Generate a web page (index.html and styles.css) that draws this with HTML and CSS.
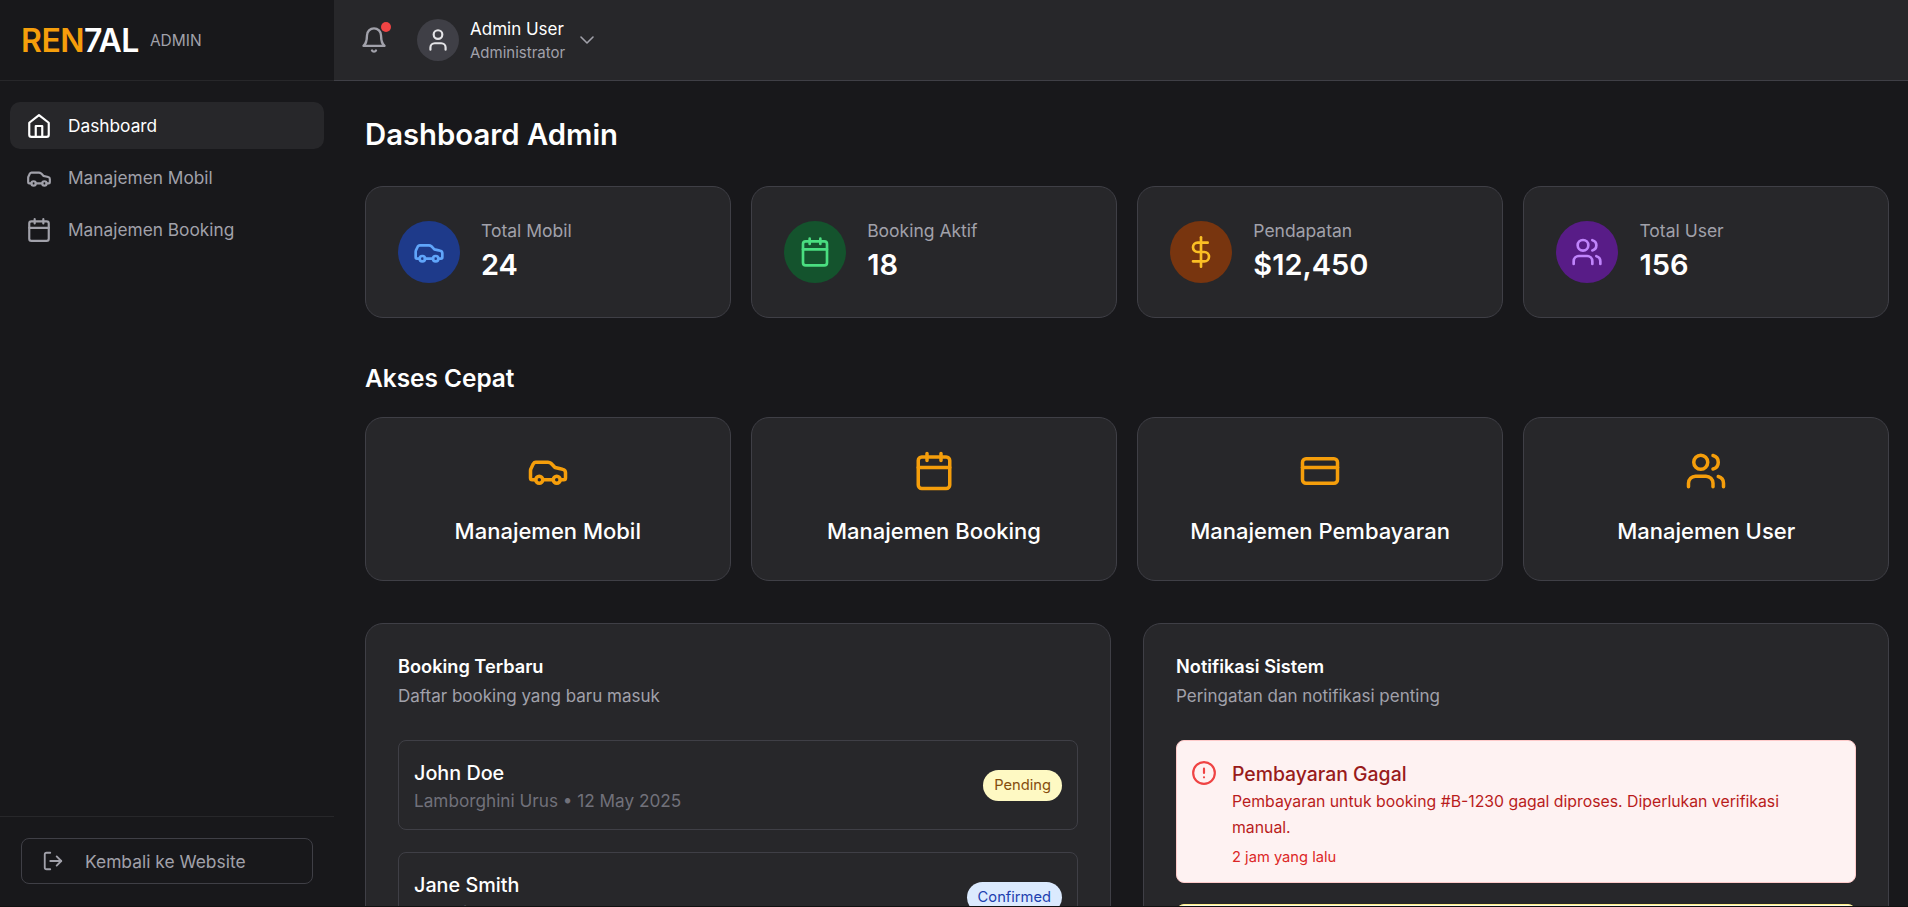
FILE: index.html
```html
<!DOCTYPE html>
<html lang="en">

<head>
    <meta charset="UTF-8">
    <meta name="viewport" content="width=device-width, initial-scale=1.0">
    <title>REN7AL Admin</title>
    <link rel="stylesheet" href="styles.css">
</head>

<body>
    <svg class="sprite" aria-hidden="true">
        <symbol id="i-home" viewBox="0 0 24 24"><path d="M3 9l9-7 9 7v11a2 2 0 0 1-2 2H5a2 2 0 0 1-2-2z"/><path d="M9 22V12h6v10"/></symbol>
        <symbol id="i-car" viewBox="0 0 24 24"><path d="M19 17h2c.6 0 1-.4 1-1v-3c0-.9-.7-1.7-1.5-1.9C18.7 10.6 16 10 16 10s-1.3-1.4-2.2-2.3c-.5-.4-1.1-.7-1.8-.7H5c-.6 0-1.1.4-1.4.9l-1.4 2.9A3.7 3.7 0 0 0 2 12v4c0 .6.4 1 1 1h2"/><circle cx="7" cy="17" r="2"/><path d="M9 17h6"/><circle cx="17" cy="17" r="2"/></symbol>
        <symbol id="i-calendar" viewBox="0 0 24 24"><rect x="3" y="4" width="18" height="18" rx="2"/><path d="M16 2v4M8 2v4M3 10h18"/></symbol>
        <symbol id="i-dollar" viewBox="0 0 24 24"><path d="M12 1v22"/><path d="M17 5H9.5a3.5 3.5 0 0 0 0 7h5a3.5 3.5 0 0 1 0 7H6"/></symbol>
        <symbol id="i-users" viewBox="0 0 24 24"><path d="M16 21v-2a4 4 0 0 0-4-4H6a4 4 0 0 0-4 4v2"/><circle cx="9" cy="7" r="4"/><path d="M22 21v-2a4 4 0 0 0-3-3.87"/><path d="M16 3.13a4 4 0 0 1 0 7.75"/></symbol>
        <symbol id="i-card" viewBox="0 0 24 24"><rect x="2" y="5" width="20" height="14" rx="2"/><path d="M2 10h20"/></symbol>
        <symbol id="i-bell" viewBox="0 0 24 24"><path d="M6 8a6 6 0 0 1 12 0c0 7 3 9 3 9H3s3-2 3-9"/><path d="M10.3 21a1.94 1.94 0 0 0 3.4 0"/></symbol>
        <symbol id="i-user" viewBox="0 0 24 24"><path d="M19 21v-2a4 4 0 0 0-4-4H9a4 4 0 0 0-4 4v2"/><circle cx="12" cy="7" r="4"/></symbol>
        <symbol id="i-chevron" viewBox="0 0 24 24"><path d="m6 9 6 6 6-6"/></symbol>
        <symbol id="i-logout" viewBox="0 0 24 24"><path d="M9 21H5a2 2 0 0 1-2-2V5a2 2 0 0 1 2-2h4"/><path d="m16 17 5-5-5-5"/><path d="M21 12H9"/></symbol>
        <symbol id="i-alert" viewBox="0 0 24 24"><circle cx="12" cy="12" r="10"/><path d="M12 8v4M12 16h.01"/></symbol>
    </svg>

    <div class="app">
        <aside class="sidebar">
            <div class="brand">
                <span class="logo"><span class="logo-accent">REN</span>7AL</span>
                <span class="logo-tag">ADMIN</span>
            </div>
            <nav class="side-nav">
                <a class="side-link active" href="#"><svg class="icon icon-26"><use href="#i-home"/></svg>Dashboard</a>
                <a class="side-link" href="#"><svg class="icon icon-26"><use href="#i-car"/></svg>Manajemen Mobil</a>
                <a class="side-link" href="#"><svg class="icon icon-26"><use href="#i-calendar"/></svg>Manajemen Booking</a>
            </nav>
            <div class="side-footer">
                <a class="back-btn" href="#"><svg class="icon icon-22"><use href="#i-logout"/></svg>Kembali ke Website</a>
            </div>
        </aside>

        <div class="content">
            <header class="topbar">
                <div class="bell">
                    <svg class="icon icon-28"><use href="#i-bell"/></svg>
                    <span class="bell-dot"></span>
                </div>
                <div class="avatar"><svg class="icon icon-26"><use href="#i-user"/></svg></div>
                <div class="user-info">
                    <div class="user-name">Admin User</div>
                    <div class="user-role">Administrator</div>
                </div>
                <svg class="icon icon-24 chevron"><use href="#i-chevron"/></svg>
            </header>

            <main class="main">
                <h1 class="page-title">Dashboard Admin</h1>

                <section class="card-grid">
                    <div class="card stat-card">
                        <div class="stat-icon stat-blue"><svg class="icon icon-32"><use href="#i-car"/></svg></div>
                        <div>
                            <div class="stat-label">Total Mobil</div>
                            <div class="stat-value">24</div>
                        </div>
                    </div>
                    <div class="card stat-card">
                        <div class="stat-icon stat-green"><svg class="icon icon-32"><use href="#i-calendar"/></svg></div>
                        <div>
                            <div class="stat-label">Booking Aktif</div>
                            <div class="stat-value">18</div>
                        </div>
                    </div>
                    <div class="card stat-card">
                        <div class="stat-icon stat-orange"><svg class="icon icon-32"><use href="#i-dollar"/></svg></div>
                        <div>
                            <div class="stat-label">Pendapatan</div>
                            <div class="stat-value">$12,450</div>
                        </div>
                    </div>
                    <div class="card stat-card">
                        <div class="stat-icon stat-purple"><svg class="icon icon-32"><use href="#i-users"/></svg></div>
                        <div>
                            <div class="stat-label">Total User</div>
                            <div class="stat-value">156</div>
                        </div>
                    </div>
                </section>

                <h2 class="section-title">Akses Cepat</h2>

                <section class="card-grid">
                    <a class="card quick-card" href="#"><svg class="icon icon-42"><use href="#i-car"/></svg><span>Manajemen Mobil</span></a>
                    <a class="card quick-card" href="#"><svg class="icon icon-42"><use href="#i-calendar"/></svg><span>Manajemen Booking</span></a>
                    <a class="card quick-card" href="#"><svg class="icon icon-42"><use href="#i-card"/></svg><span>Manajemen Pembayaran</span></a>
                    <a class="card quick-card" href="#"><svg class="icon icon-42"><use href="#i-users"/></svg><span>Manajemen User</span></a>
                </section>

                <section class="panel-grid">
                    <div class="card panel">
                        <h3 class="panel-title">Booking Terbaru</h3>
                        <p class="panel-sub">Daftar booking yang baru masuk</p>
                        <div class="booking">
                            <div class="booking-info">
                                <div class="booking-name">John Doe</div>
                                <div class="booking-meta">Lamborghini Urus • 12 May 2025</div>
                            </div>
                            <span class="badge badge-pending">Pending</span>
                        </div>
                        <div class="booking">
                            <div class="booking-info">
                                <div class="booking-name">Jane Smith</div>
                                <div class="booking-meta">Ferrari 488 • 14 May 2025</div>
                            </div>
                            <span class="badge badge-confirmed">Confirmed</span>
                        </div>
                    </div>

                    <div class="card panel">
                        <h3 class="panel-title">Notifikasi Sistem</h3>
                        <p class="panel-sub">Peringatan dan notifikasi penting</p>
                        <div class="alert alert-red">
                            <svg class="icon icon-26 alert-icon"><use href="#i-alert"/></svg>
                            <div>
                                <div class="alert-title">Pembayaran Gagal</div>
                                <div class="alert-text">Pembayaran untuk booking #B-1230 gagal diproses. Diperlukan verifikasi manual.</div>
                                <div class="alert-time">2 jam yang lalu</div>
                            </div>
                        </div>
                        <div class="alert alert-yellow"></div>
                    </div>
                </section>
            </main>
        </div>
    </div>
    <div class="bottom-strip"></div>
</body>

</html>
```

FILE: styles.css
```css
* {
    box-sizing: border-box;
}

body {
    font-family: Inter, "Noto Sans", sans-serif;
    margin: 0;
    padding: 0;
    height: 907px;
    overflow: hidden;
    background-color: #18181b;
    color: #fff;
}

a {
    color: inherit;
    text-decoration: none;
}

.sprite {
    display: none;
}

.icon {
    fill: none;
    stroke: currentColor;
    stroke-width: 2;
    stroke-linecap: round;
    stroke-linejoin: round;
    flex-shrink: 0;
}

.icon-22 { width: 22px; height: 22px; }
.icon-24 { width: 24px; height: 24px; }
.icon-26 { width: 26px; height: 26px; }
.icon-28 { width: 28px; height: 28px; }
.icon-32 { width: 32px; height: 32px; }
.icon-42 { width: 42px; height: 42px; }

.app {
    display: flex;
    height: 906px;
}

/* sidebar */
.sidebar {
    width: 334px;
    flex-shrink: 0;
    display: flex;
    flex-direction: column;
    background-color: #18181b;
}

.brand {
    height: 81px;
    padding: 0 21px;
    display: flex;
    align-items: center;
    gap: 11px;
    border-bottom: 1px solid #27272a;
}

.logo {
    font-size: 32px;
    font-weight: 600;
    letter-spacing: -0.5px;
}

.logo-accent {
    color: #f59e0b;
}

.logo-tag {
    font-size: 15.5px;
    color: #a1a1aa;
}

.side-nav {
    flex: 1;
    padding: 21px 10px;
    display: flex;
    flex-direction: column;
    gap: 5px;
}

.side-link {
    height: 47px;
    padding: 0 16px;
    display: flex;
    align-items: center;
    gap: 16px;
    border-radius: 10px;
    font-size: 17.3px;
    color: #a1a1aa;
}

.side-link.active {
    background-color: #27272a;
    color: #fff;
}

.side-footer {
    height: 90px;
    padding: 21px;
    border-top: 1px solid #27272a;
}

.back-btn {
    height: 46px;
    padding: 0 20px;
    display: flex;
    align-items: center;
    gap: 21px;
    border: 1px solid #3f3f46;
    border-radius: 8px;
    font-size: 17.4px;
    color: #a1a1aa;
}

/* top bar */
.content {
    flex: 1;
    min-width: 0;
    display: flex;
    flex-direction: column;
}

.topbar {
    height: 81px;
    flex-shrink: 0;
    padding-left: 26px;
    display: flex;
    align-items: center;
    background-color: #27272a;
    border-bottom: 1px solid #3f3f46;
    color: #a1a1aa;
}

.bell {
    position: relative;
    display: flex;
    margin-right: 29px;
}

.bell-dot {
    position: absolute;
    top: -4px;
    right: -3px;
    width: 10px;
    height: 10px;
    border-radius: 50%;
    background-color: #ef4444;
}

.avatar {
    width: 42px;
    height: 42px;
    margin-right: 11px;
    border-radius: 50%;
    display: flex;
    align-items: center;
    justify-content: center;
    background-color: #3f3f46;
    color: #e4e4e7;
}

.user-info {
    padding-top: 2px;
}

.user-name {
    font-size: 17px;
    line-height: 24px;
    color: #fff;
}

.user-role {
    font-size: 15px;
    line-height: 24px;
    color: #a1a1aa;
}

.chevron {
    margin-left: 10px;
    stroke-width: 1.6;
}

/* main */
.main {
    flex: 1;
    min-height: 0;
    overflow: hidden;
    padding: 0 19px 0 31px;
}

.page-title {
    margin: 0;
    padding-top: 36px;
    height: 105px;
    font-size: 29.3px;
    line-height: 36px;
    font-weight: 600;
}

.card-grid {
    display: grid;
    grid-template-columns: repeat(4, 1fr);
    gap: 20.6px;
}

.card {
    background-color: #27272a;
    border: 1px solid #3f3f46;
    border-radius: 18px;
}

.stat-card {
    height: 132px;
    padding: 0 32px;
    display: flex;
    align-items: center;
    gap: 21px;
}

.stat-icon {
    width: 62px;
    height: 62px;
    border-radius: 50%;
    display: flex;
    align-items: center;
    justify-content: center;
}

.stat-blue { background-color: #1e3a8a; color: #60a5fa; }
.stat-green { background-color: #14532d; color: #4ade80; }
.stat-orange { background-color: #78350f; color: #fbbf24; }
.stat-purple { background-color: #581c87; color: #c084fc; }

.stat-label {
    font-size: 17.5px;
    line-height: 24px;
    margin-bottom: 2px;
    color: #a1a1aa;
}

.stat-value {
    font-size: 29px;
    line-height: 40px;
    font-weight: 600;
}

.section-title {
    margin: 0;
    height: 99px;
    padding-top: 44px;
    font-size: 24.4px;
    line-height: 32px;
    font-weight: 600;
}

.quick-card {
    height: 164px;
    display: flex;
    flex-direction: column;
    align-items: center;
    gap: 23px;
    padding-top: 32px;
    font-size: 22px;
    line-height: 32px;
    font-weight: 500;
}

.quick-card .icon {
    color: #f59e0b;
}

.panel-grid {
    margin-top: 42px;
    display: grid;
    grid-template-columns: repeat(2, 1fr);
    gap: 32px;
}

.panel {
    padding: 30px 32px 0;
    height: 500px;
}

.panel-title {
    margin: 0;
    font-size: 18.2px;
    line-height: 24px;
    font-weight: 600;
}

.panel-sub {
    margin: 6px 0 32px;
    font-size: 17px;
    line-height: 24px;
    color: #a1a1aa;
}

.booking {
    height: 90px;
    margin-bottom: 22px;
    padding: 0 15px;
    display: flex;
    align-items: center;
    justify-content: space-between;
    border: 1px solid #3f3f46;
    border-radius: 8px;
}

.booking-info {
    padding-top: 4px;
}

.booking-name {
    font-size: 19.8px;
    line-height: 28px;
    font-weight: 500;
}

.booking-meta {
    font-size: 17.2px;
    line-height: 28px;
    color: #71717a;
}

.badge {
    height: 31px;
    padding: 0 11px;
    display: flex;
    align-items: center;
    border-radius: 16px;
    font-size: 14.7px;
}

.badge-pending { background-color: #fef9c3; color: #854d0e; }
.badge-confirmed { background-color: #dbeafe; color: #1e40af; }

.alert {
    margin-bottom: 21px;
    padding: 19px 14px 13px;
    display: flex;
    gap: 15px;
    border: 1px solid #fecaca;
    border-radius: 8px;
    background-color: #fef2f2;
}

.alert-icon {
    color: #ef4444;
}

.alert-title {
    font-size: 19.4px;
    line-height: 29px;
    font-weight: 500;
    color: #991b1b;
}

.alert-text {
    font-size: 15.8px;
    line-height: 26px;
    color: #b91c1c;
}

.alert-time {
    margin-top: 4px;
    font-size: 14.7px;
    line-height: 24px;
    color: #dc2626;
}

.alert-yellow {
    height: 120px;
    border-color: #fef08a;
    background-color: #fefce8;
}

.bottom-strip {
    height: 1px;
    background-color: #111;
}
```
